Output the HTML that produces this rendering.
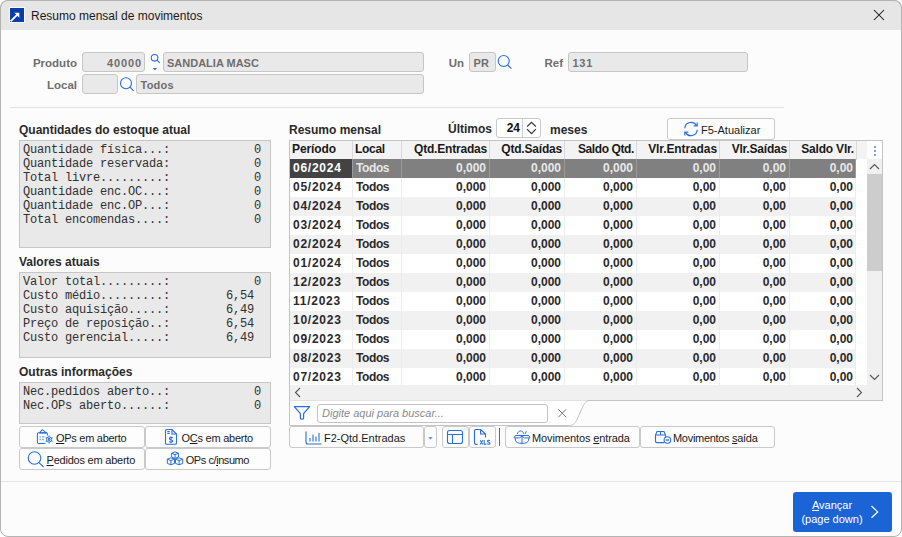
<!DOCTYPE html>
<html>
<head>
<meta charset="utf-8">
<title>Resumo mensal de movimentos</title>
<style>
html,body{margin:0;padding:0;}
body{width:902px;height:537px;overflow:hidden;background:#fff;font-family:"Liberation Sans",sans-serif;font-size:12px;color:#222;position:relative;}
.abs{position:absolute;box-sizing:border-box;white-space:pre;}
#win{left:0;top:0;width:902px;height:537px;background:#fcfcfc;border:1px solid #b4b4b4;border-radius:8px;overflow:hidden;}
#titlebar{left:0;top:0;width:902px;height:30px;background:#e6e6e6;}
#title{left:31px;top:8px;font-size:12px;color:#1a1a1a;line-height:16px;}
.lbl{font-weight:bold;color:#6e6e6e;font-size:11.5px;line-height:14px;text-align:right;}
.inp{background:#e9e9e9;border:1px solid #c6c6c6;border-radius:3px;font-weight:bold;color:#6e6e6e;font-size:11px;line-height:20px;padding:0 3px;height:20px;}
.hd{font-weight:bold;color:#2a2a2a;font-size:12px;line-height:14px;}
.box{background:#e9e9e9;border:1px solid #c6c6c6;font-family:"Liberation Mono",monospace;font-size:12px;letter-spacing:-0.2px;line-height:14px;color:#303030;padding:2px 0 0 3px;}
.btn{background:#fdfdfd;border:1px solid #c9c9c9;border-radius:3px;font-size:11px;line-height:20px;color:#1a1a1a;text-align:center;height:22px;}
.bt{font-size:11px;line-height:14px;color:#1a1a1a;}
.hline{height:1px;background:#e0e0e0;}
u{text-decoration:underline;text-underline-offset:1px;}

.ghr,.gr{display:flex;height:19px;font-weight:bold;font-size:12px;line-height:18px;}
.ghr{background:#f3f3f3;color:#1a1a1a;}
.ghr span,.gr span{display:block;box-sizing:border-box;height:19px;overflow:hidden;white-space:pre;}
.ghr span{border-right:1px solid #d9d9d9;padding:0 2px;line-height:16px;letter-spacing:-0.2px;box-shadow:inset 0 1px 0 #f3f3f3, inset 0 -1px 0 #f3f3f3;}
.gr span{border-right:1px solid #ececec;padding:0 3px 0 3px;}
.gr{color:#2a2a2a;}
.gr.odd{background:#fff;}
.gr.even{background:#f1f1f1;}
.gr.sel{background:#808080;color:#e8e8e8;}
.gr.sel span{border-right-color:#9a9a9a;}
.gr.sel .c1{background:#434343;color:#fff;}
.c1{width:63px;letter-spacing:0.75px;}
.ghr .c1{letter-spacing:-0.1px;}
.ghr .c2{letter-spacing:-0.3px;}
.ghr .c5{letter-spacing:-0.4px;}
.ghr .c6{letter-spacing:-0.1px;}
.c2{width:49px;letter-spacing:-0.4px;}
.c3{width:88px;text-align:right;}
.c4{width:75px;text-align:right;}
.c5{width:72px;text-align:right;}
.c6{width:83px;text-align:right;}
.c7{width:70px;text-align:right;}
.c8{width:67px;text-align:right;}
.gr .c8{width:66px;padding-right:2px;}
</style>
</head>
<body>
<div id="win" class="abs"></div>
<div id="titlebar" class="abs" style="border:1px solid #b4b4b4;border-bottom:none;border-radius:8px 8px 0 0;"></div>
<svg class="abs" style="left:9px;top:7px" width="16" height="16" viewBox="0 0 16 16"><rect width="16" height="16" fill="#fafafa"/><rect x="1" y="1" width="14" height="14" fill="#0b3daa"/><path d="M1.6 14.4 L8.8 7.2" stroke="#fff" stroke-width="1.9" fill="none"/><path d="M5.4 5.8 H10.3 V10.7 Z" fill="#fff"/></svg>
<div id="title" class="abs">Resumo mensal de movimentos</div>
<svg class="abs" style="left:873px;top:9px" width="12" height="12" viewBox="0 0 12 12"><path d="M1 1 L11 11 M11 1 L1 11" stroke="#111" stroke-width="1.05" fill="none"/></svg>

<!-- top fields -->
<div class="abs lbl" style="left:20px;top:56px;width:57px;">Produto</div>
<div class="abs inp" style="left:82px;top:52px;width:63px;text-align:right;letter-spacing:0.9px;padding-right:2px;">40000</div>
<div class="abs inp" style="left:163px;top:52px;width:261px;">SANDALIA MASC</div>
<div class="abs lbl" style="left:20px;top:78px;width:57px;">Local</div>
<div class="abs inp" style="left:82px;top:74px;width:36px;"></div>
<div class="abs inp" style="left:136px;top:74px;width:288px;letter-spacing:0.25px;padding-left:3.5px;">Todos</div>
<div class="abs lbl" style="left:440px;top:56px;width:24px;">Un</div>
<div class="abs inp" style="left:469px;top:52px;width:27px;padding-left:3.6px;">PR</div>
<div class="abs lbl" style="left:535px;top:56px;width:28px;">Ref</div>
<div class="abs inp" style="left:568px;top:52px;width:180px;letter-spacing:0.8px;padding-left:3.4px;">131</div>
<div class="abs hline" style="left:10px;top:107px;width:774px;background:#e2e2e2;"></div>

<!-- left panel -->
<div class="abs hd" style="left:19px;top:123px;">Quantidades do estoque atual</div>
<div class="abs box" style="left:19px;top:140px;width:252px;height:108px;">Quantidade física...:            0
Quantidade reservada:            0
Total livre.........:            0
Quantidade enc.OC...:            0
Quantidade enc.OP...:            0
Total encomendas....:            0</div>
<div class="abs hd" style="left:19px;top:255px;">Valores atuais</div>
<div class="abs box" style="left:19px;top:272px;width:252px;height:86px;">Valor total.........:            0
Custo médio.........:        6,54
Custo aquisição.....:        6,49
Preço de reposição..:        6,54
Custo gerencial.....:        6,49</div>
<div class="abs hd" style="left:19px;top:365px;">Outras informações</div>
<div class="abs box" style="left:19px;top:382px;width:252px;height:42px;">Nec.pedidos aberto..:            0
Nec.OPs aberto......:            0</div>
<div class="abs btn" style="left:19px;top:426px;width:126px;"></div><div class="abs bt" style="left:56px;top:431px;letter-spacing:-0.28px;"><u>O</u>Ps em aberto</div>
<div class="abs btn" style="left:145px;top:426px;width:126px;"></div><div class="abs bt" style="left:181.5px;top:431px;letter-spacing:-0.25px;">O<u>C</u>s em aberto</div>
<div class="abs btn" style="left:19px;top:448px;width:126px;"></div><div class="abs bt" style="left:46.5px;top:453px;letter-spacing:-0.22px;"><u>P</u>edidos em aberto</div>
<div class="abs btn" style="left:145px;top:448px;width:126px;"></div><div class="abs bt" style="left:185.7px;top:453px;letter-spacing:-0.43px;">OPs c/<u>i</u>nsumo</div>

<!-- right panel -->
<div class="abs hd" style="left:289px;top:123px;">Resumo mensal</div>
<div class="abs hd" style="left:448px;top:122px;">Últimos</div>
<div class="abs hd" style="left:550px;top:123px;">meses</div>

<!-- grid -->
<div class="abs" style="left:289px;top:140px;width:594px;height:261px;border:1px solid #c4c4c4;background:#fff;"></div>
<div class="abs ghr" style="left:290px;top:141px;width:577px;height:18px;"><span class="c1">Período</span><span class="c2">Local</span><span class="c3">Qtd.Entradas</span><span class="c4">Qtd.Saídas</span><span class="c5">Saldo Qtd.</span><span class="c6">Vlr.Entradas</span><span class="c7">Vlr.Saídas</span><span class="c8">Saldo Vlr.</span></div>
<div class="abs gr sel" style="left:290px;top:159px;"><span class="c1">06/2024</span><span class="c2">Todos</span><span class="c3">0,000</span><span class="c4">0,000</span><span class="c5">0,000</span><span class="c6">0,00</span><span class="c7">0,00</span><span class="c8">0,00</span></div>
<div class="abs gr odd" style="left:290px;top:178px;"><span class="c1">05/2024</span><span class="c2">Todos</span><span class="c3">0,000</span><span class="c4">0,000</span><span class="c5">0,000</span><span class="c6">0,00</span><span class="c7">0,00</span><span class="c8">0,00</span></div>
<div class="abs gr even" style="left:290px;top:197px;"><span class="c1">04/2024</span><span class="c2">Todos</span><span class="c3">0,000</span><span class="c4">0,000</span><span class="c5">0,000</span><span class="c6">0,00</span><span class="c7">0,00</span><span class="c8">0,00</span></div>
<div class="abs gr odd" style="left:290px;top:216px;"><span class="c1">03/2024</span><span class="c2">Todos</span><span class="c3">0,000</span><span class="c4">0,000</span><span class="c5">0,000</span><span class="c6">0,00</span><span class="c7">0,00</span><span class="c8">0,00</span></div>
<div class="abs gr even" style="left:290px;top:235px;"><span class="c1">02/2024</span><span class="c2">Todos</span><span class="c3">0,000</span><span class="c4">0,000</span><span class="c5">0,000</span><span class="c6">0,00</span><span class="c7">0,00</span><span class="c8">0,00</span></div>
<div class="abs gr odd" style="left:290px;top:254px;"><span class="c1">01/2024</span><span class="c2">Todos</span><span class="c3">0,000</span><span class="c4">0,000</span><span class="c5">0,000</span><span class="c6">0,00</span><span class="c7">0,00</span><span class="c8">0,00</span></div>
<div class="abs gr even" style="left:290px;top:273px;"><span class="c1">12/2023</span><span class="c2">Todos</span><span class="c3">0,000</span><span class="c4">0,000</span><span class="c5">0,000</span><span class="c6">0,00</span><span class="c7">0,00</span><span class="c8">0,00</span></div>
<div class="abs gr odd" style="left:290px;top:292px;"><span class="c1">11/2023</span><span class="c2">Todos</span><span class="c3">0,000</span><span class="c4">0,000</span><span class="c5">0,000</span><span class="c6">0,00</span><span class="c7">0,00</span><span class="c8">0,00</span></div>
<div class="abs gr even" style="left:290px;top:311px;"><span class="c1">10/2023</span><span class="c2">Todos</span><span class="c3">0,000</span><span class="c4">0,000</span><span class="c5">0,000</span><span class="c6">0,00</span><span class="c7">0,00</span><span class="c8">0,00</span></div>
<div class="abs gr odd" style="left:290px;top:330px;"><span class="c1">09/2023</span><span class="c2">Todos</span><span class="c3">0,000</span><span class="c4">0,000</span><span class="c5">0,000</span><span class="c6">0,00</span><span class="c7">0,00</span><span class="c8">0,00</span></div>
<div class="abs gr even" style="left:290px;top:349px;"><span class="c1">08/2023</span><span class="c2">Todos</span><span class="c3">0,000</span><span class="c4">0,000</span><span class="c5">0,000</span><span class="c6">0,00</span><span class="c7">0,00</span><span class="c8">0,00</span></div>
<div class="abs gr odd" style="left:290px;top:368px;"><span class="c1">07/2023</span><span class="c2">Todos</span><span class="c3">0,000</span><span class="c4">0,000</span><span class="c5">0,000</span><span class="c6">0,00</span><span class="c7">0,00</span><span class="c8">0,00</span></div>
<!-- /grid -->

<div class="abs hline" style="left:1px;top:481px;width:900px;background:#e6e6e6;"></div>
<div class="abs" style="left:793px;top:492px;width:99px;height:40px;background:#1b64d6;border-radius:3px;"></div>

<!-- grid chrome -->
<div class="abs" style="left:867px;top:141px;width:15px;height:18px;background:#fff;"></div>
<div class="abs" style="left:874px;top:146px;width:2px;height:2px;background:#4a86e4;border-radius:1px;"></div>
<div class="abs" style="left:874px;top:150px;width:2px;height:2px;background:#4a86e4;border-radius:1px;"></div>
<div class="abs" style="left:874px;top:154px;width:2px;height:2px;background:#4a86e4;border-radius:1px;"></div>
<div class="abs" style="left:867px;top:159px;width:15px;height:226px;background:#f0f0f0;"></div>
<div class="abs" style="left:867px;top:174px;width:15px;height:97px;background:#cdcdcd;"></div>
<svg class="abs" style="left:867px;top:159px" width="15" height="15" viewBox="0 0 15 15"><path d="M3 10 L7.5 5.5 L12 10" stroke="#555" stroke-width="1.1" fill="none"/></svg>
<svg class="abs" style="left:867px;top:370px" width="15" height="15" viewBox="0 0 15 15"><path d="M3 5 L7.5 9.5 L12 5" stroke="#555" stroke-width="1.1" fill="none"/></svg>
<div class="abs" style="left:290px;top:385px;width:592px;height:15px;background:#f0f0f0;"></div>
<svg class="abs" style="left:290px;top:385px" width="15" height="15" viewBox="0 0 15 15"><path d="M10 3 L5.5 7.5 L10 12" stroke="#555" stroke-width="1.1" fill="none"/></svg>
<svg class="abs" style="left:852px;top:385px" width="15" height="15" viewBox="0 0 15 15"><path d="M5 3 L9.5 7.5 L5 12" stroke="#555" stroke-width="1.1" fill="none"/></svg>

<!-- spinner -->
<div class="abs" style="left:496px;top:118px;width:45px;height:20px;background:#fff;border:1px solid #c8c8c8;border-radius:3px;"></div>
<div class="abs" style="left:522px;top:119px;width:1px;height:18px;background:#d0d0d0;"></div>
<div class="abs hd" style="left:497px;top:121px;width:23px;text-align:right;color:#111;">24</div>
<svg class="abs" style="left:523px;top:119px" width="17" height="18" viewBox="0 0 17 18"><path d="M4.1 7.7 L8.5 3.3 L12.9 7.7 M4.1 10.2 L8.5 14.6 L12.9 10.2" stroke="#333" stroke-width="1.2" fill="none"/></svg>

<!-- F5 -->
<div class="abs btn" style="left:667px;top:118px;width:108px;height:22px;"></div>
<svg class="abs" style="left:683px;top:121px" width="16" height="16" viewBox="0 0 16 16"><g stroke="#2a6fdb" stroke-width="1.2" fill="none"><path d="M1.8 7.2 A6.3 6.3 0 0 1 13.6 4.6"/><path d="M14.2 8.8 A6.3 6.3 0 0 1 2.4 11.4"/><path d="M14.2 1.4 V4.9 H10.7"/><path d="M1.8 14.6 V11.1 H5.3"/></g></svg>
<div class="abs" style="left:701px;top:123px;font-size:11px;line-height:14px;color:#1a1a1a;">F5-Atualizar</div>

<!-- filter bar -->
<svg class="abs" style="left:289px;top:400px" width="310" height="27" viewBox="0 0 310 27"><path d="M0.5 0.5 V25.5 H280 C285 25.5 286.5 22.5 288.2 19 L293.6 7.2 C295.4 3.2 297 0.5 301 0.5 Z" fill="#fefefe"/><path d="M0.5 0.5 V25.5 H280 C285 25.5 286.5 22.5 288.2 19 L293.6 7.2 C295.4 3.2 297 0.5 301 0.5" stroke="#c4c4c4" stroke-width="1" fill="none"/></svg>
<svg class="abs" style="left:293px;top:405px" width="18" height="16" viewBox="0 0 18 16"><path d="M1.3 1.6 H16.6 L10.6 8.6 V13 Q10.6 14.2 9.6 14.2 H8.3 Q7.4 14.2 7.4 13 V8.6 Z" stroke="#2a6fdb" stroke-width="1.25" fill="none" stroke-linejoin="round"/></svg>
<div class="abs" style="left:317px;top:404px;width:231px;height:19px;background:#fff;border:1px solid #c4c4c4;border-radius:3px;font-size:11px;font-style:italic;color:#8a8a8a;line-height:16px;padding-left:4px;">Digite aqui para buscar...</div>
<svg class="abs" style="left:557px;top:408px" width="11" height="11" viewBox="0 0 11 11"><path d="M1.3 1.3 L9.2 9.2 M9.2 1.3 L1.3 9.2" stroke="#777" stroke-width="1" fill="none"/></svg>

<!-- toolbar -->
<div class="abs btn" style="left:289px;top:426px;width:135px;"></div>
<svg class="abs" style="left:305px;top:431px" width="17" height="14" viewBox="0 0 17 14"><path d="M1 0.5 V11 Q1 13 3 13 H16.5 M5 7 V10.5 M8 3.5 V10.5 M11 5.5 V10.5 M14 2 V10.5" stroke="#2a6fdb" stroke-width="1.1" fill="none"/></svg>
<div class="abs" style="left:324px;top:431px;font-size:11px;line-height:14px;color:#1a1a1a;">F2-Qtd.Entradas</div>
<div class="abs btn" style="left:424px;top:426px;width:13px;"></div>
<svg class="abs" style="left:428px;top:437px" width="5" height="3" viewBox="0 0 5 3"><path d="M0.3 0.3 H4.7 L2.5 2.6 Z" fill="#4a86e4"/></svg>
<div class="abs btn" style="left:442px;top:426px;width:27px;"></div>
<svg class="abs" style="left:446px;top:429px" width="18" height="16" viewBox="0 0 18 16"><path d="M3.5 1.5 H14.5 Q16.5 1.5 16.5 3.5 V12.5 Q16.5 14.5 14.5 14.5 H3.5 Q1.5 14.5 1.5 12.5 V3.5 Q1.5 1.5 3.5 1.5 Z M1.5 5.5 H16.5 M6.5 5.5 V14.5" stroke="#2a6fdb" stroke-width="1.1" fill="none"/></svg>
<div class="abs btn" style="left:469px;top:426px;width:27px;"></div>
<svg class="abs" style="left:473px;top:428px" width="19" height="18" viewBox="0 0 19 18"><path d="M4.6 16.3 H3 Q1.5 16.3 1.5 14.8 V3 Q1.5 1.5 3 1.5 H7.6 L12.5 6 V9.5 M7.6 1.5 V6 H12.5" stroke="#2a6fdb" stroke-width="1.15" fill="none"/><path d="M7.2 12.2 L9.8 16.4 M9.8 12.2 L7.2 16.4 M11.2 12 V16.1 H13.4 M16.9 12.9 Q16.4 12.3 15.6 12.3 Q14.5 12.3 14.5 13.2 Q14.5 14 15.7 14.3 Q17 14.6 17 15.4 Q17 16.2 15.7 16.2 Q14.8 16.2 14.3 15.6" stroke="#2a6fdb" stroke-width="1.05" fill="none"/></svg>
<div class="abs" style="left:499px;top:428px;width:1px;height:18px;background:#666;"></div>
<div class="abs btn" style="left:505px;top:426px;width:135px;"></div>
<div class="abs" style="left:532px;top:431px;font-size:11px;line-height:14px;color:#1a1a1a;letter-spacing:-0.1px;">Movimentos <u>e</u>ntrada</div>
<div class="abs btn" style="left:640px;top:426px;width:135px;"></div>
<div class="abs" style="left:673px;top:431px;font-size:11px;line-height:14px;color:#1a1a1a;letter-spacing:-0.3px;">Movimentos <u>s</u>aída</div>

<!-- avancar -->
<div class="abs" style="left:793.5px;top:498px;width:77px;text-align:center;color:#fff;font-size:11px;line-height:14px;"><u>A</u>vançar
(page down)</div>
<svg class="abs" style="left:868px;top:503px" width="14" height="18" viewBox="0 0 14 18"><path d="M3.5 3 L9.7 8.9 L3.5 14.8" stroke="#fff" stroke-width="1.2" fill="none"/></svg>

<!-- icons -->
<!-- small magnifier w/ dropdown (produto) -->
<svg class="abs" style="left:149px;top:52px" width="14" height="20" viewBox="0 0 14 20"><circle cx="5.6" cy="5.8" r="3.3" stroke="#2a6fdb" stroke-width="1.1" fill="none"/><path d="M8 8.2 L10.8 10.8" stroke="#2a6fdb" stroke-width="1.1" fill="none"/><path d="M3.8 16 H8 L5.9 18.2 Z" fill="#2a6fdb"/></svg>
<!-- magnifier local -->
<svg class="abs" style="left:119px;top:76px" width="16" height="16" viewBox="0 0 16 16"><circle cx="7" cy="7.2" r="5.5" stroke="#2a6fdb" stroke-width="1.1" fill="none"/><path d="M11 11.2 L14.6 14.8" stroke="#2a6fdb" stroke-width="1.1" fill="none"/></svg>
<!-- magnifier un -->
<svg class="abs" style="left:497px;top:54px" width="16" height="16" viewBox="0 0 16 16"><circle cx="6.7" cy="7" r="5.5" stroke="#2a6fdb" stroke-width="1.1" fill="none"/><path d="M10.7 11 L14.4 14.7" stroke="#2a6fdb" stroke-width="1.1" fill="none"/></svg>
<!-- clipboard+gear -->
<svg class="abs" style="left:36px;top:428px" width="18" height="17" viewBox="0 0 18 17"><g stroke="#2a6fdb" fill="none" stroke-width="1.05"><path d="M3.4 4.7 H2.6 Q1.4 4.7 1.4 5.9 V14.2 Q1.4 15.4 2.6 15.4 H9.4"/><path d="M10.4 4.7 Q11.4 4.7 11.4 5.7 V7.4"/><path d="M3.5 4.8 L6.3 1.7 L10.5 4.8 Z" stroke-linejoin="round"/><path d="M3.5 4.9 H10.5" stroke-width="1.3"/><path d="M3.4 8.8 H5.1 M6 8.8 H8.5 M3.4 11.5 H5.1 M6 11.5 H8" stroke-width="1.3" opacity="0.55"/><circle cx="13.1" cy="11.5" r="2.6" fill="#fcfcfc" stroke-width="0.95"/><circle cx="13.1" cy="11.5" r="0.9"/><path d="M15.44 12.85 L16.56 13.50 M13.10 14.20 L13.10 15.50 M10.76 12.85 L9.64 13.50 M10.76 10.15 L9.64 9.50 M13.10 8.80 L13.10 7.50 M15.44 10.15 L16.56 9.50" stroke-width="1.1" opacity="0.85"/></g></svg>
<!-- doc $ -->
<svg class="abs" style="left:164px;top:428px" width="14" height="18" viewBox="0 0 14 18"><g stroke="#2a6fdb" fill="none" stroke-width="1.1"><path d="M8 1.5 H2.8 Q1.5 1.5 1.5 2.8 V15 Q1.5 16.3 2.8 16.3 H11.2 Q12.5 16.3 12.5 15 V6 Z"/><path d="M8 1.5 V6 H12.5"/><path d="M3.3 3.6 H5.8 M3.3 5.5 H5.8"/></g><path d="M8.8 9.9 Q8.2 9.2 7 9.2 Q5.4 9.2 5.4 10.4 Q5.4 11.4 7 11.7 Q8.8 12 8.8 13.1 Q8.8 14.3 7 14.3 Q5.8 14.3 5.2 13.5 M7 8.2 V15.2" stroke="#2a6fdb" stroke-width="1.05" fill="none"/></svg>
<!-- magnifier pedidos -->
<svg class="abs" style="left:26px;top:450px" width="20" height="18" viewBox="0 0 20 18"><circle cx="8.5" cy="8" r="6.3" stroke="#2a6fdb" stroke-width="1.1" fill="none"/><path d="M13 12.6 L17.6 17" stroke="#2a6fdb" stroke-width="1.1" fill="none"/></svg>
<!-- cubes -->
<svg class="abs" style="left:166px;top:451px" width="18" height="15" viewBox="0 0 18 15"><g stroke="#2a6fdb" fill="none" stroke-width="1"><path d="M5.6 2.2 L9 0.8 L12.4 2.2 V6 L9 7.4 L5.6 6 Z M5.6 2.2 L9 3.6 L12.4 2.2 M9 3.6 V7.4"/><path d="M1.3 8.2 L4.9 6.8 L8.5 8.2 V12.4 L4.9 13.8 L1.3 12.4 Z M1.3 8.2 L4.9 9.6 L8.5 8.2 M4.9 9.6 V13.8"/><path d="M9.5 8.2 L13.1 6.8 L16.7 8.2 V12.4 L13.1 13.8 L9.5 12.4 Z M9.5 8.2 L13.1 9.6 L16.7 8.2 M13.1 9.6 V13.8"/></g></svg>
<!-- box in -->
<svg class="abs" style="left:513px;top:430px" width="18" height="14" viewBox="0 0 18 14"><g stroke="#2a6fdb" fill="none" stroke-width="1"><path d="M4.3 3.9 C5.2 0 10 0 10.9 3.9"/><path d="M13.3 1.2 L12.2 3.8"/><path d="M2.3 5.5 H15.8 L17 7.9 H11.6 L9 6.1 L6.4 7.9 H1 Z"/><path d="M2.4 8.4 V10.3 Q3.2 13.4 9 13.4 Q14.8 13.4 15.6 10.3 V8.4"/><path d="M9 6.4 V13.4"/></g></svg>
<!-- box out -->
<svg class="abs" style="left:654px;top:430px" width="18" height="15" viewBox="0 0 18 15"><g stroke="#2a6fdb" fill="none" stroke-width="1.1"><path d="M10 12.6 H2.8 Q1.5 12.6 1.5 11.3 V5 L3 1.5 H10 L11.5 5 V7"/><path d="M1.5 5 H11.5 M6.5 1.5 V5"/><circle cx="13.4" cy="10" r="3.3"/><path d="M11.8 10 H15" stroke-width="1.4"/></g></svg>
</body>
</html>
